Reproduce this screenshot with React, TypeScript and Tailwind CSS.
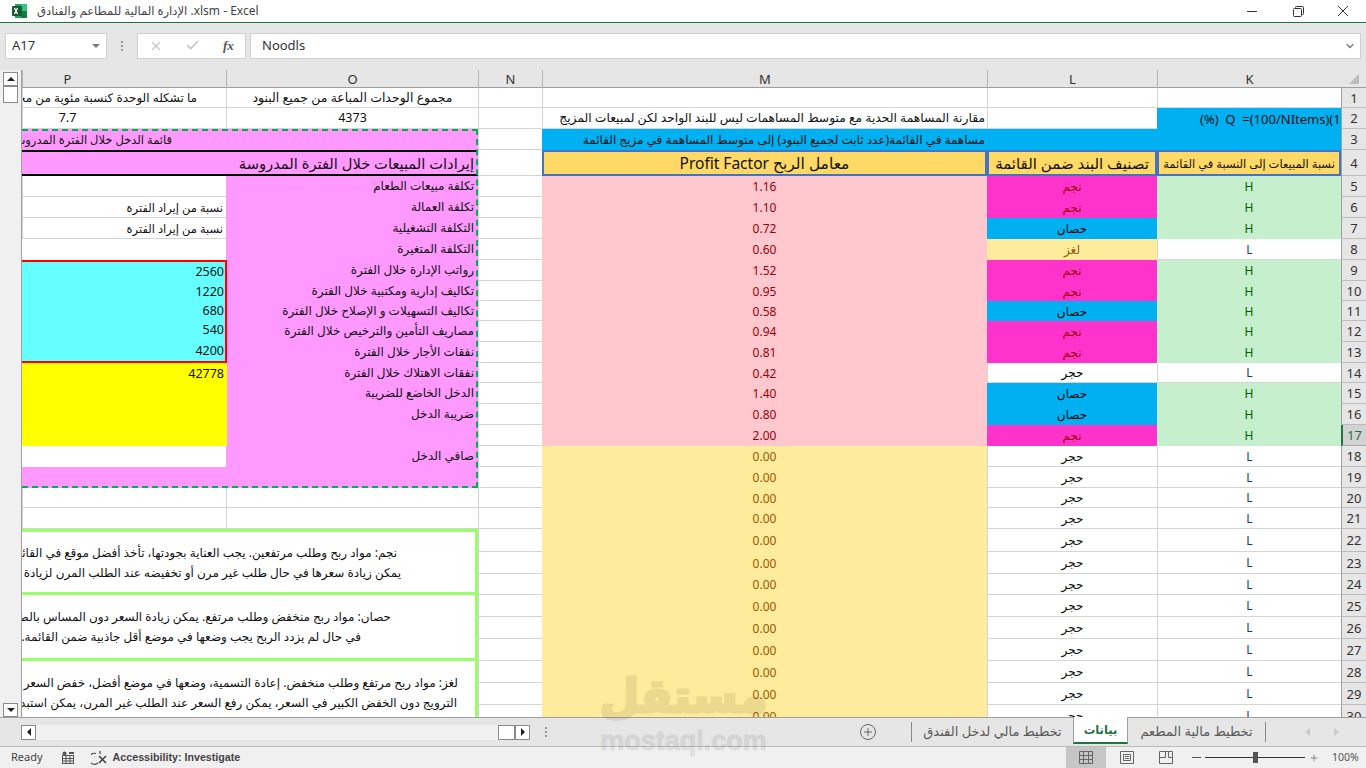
import React from 'react';
import { ChevronDown, Check, X, Plus } from 'lucide-react';

const sans = '[font-family:"Noto_Sans","DejaVu_Sans",sans-serif]';

const rowHeights = [20, 21, 21, 26, 21, 21, 21, 21, 21, 20, 20, 21, 21, 20, 21, 21, 21, 21, 21, 20, 21, 23, 22, 21, 22, 22, 22, 22, 22, 22];

// excel rows 5-17: [K, L, M]
const items: [string, string, string][] = [
  ['H', 'نجم', '1.16'],
  ['H', 'نجم', '1.10'],
  ['H', 'حصان', '0.72'],
  ['L', 'لغز', '0.60'],
  ['H', 'نجم', '1.52'],
  ['H', 'نجم', '0.95'],
  ['H', 'حصان', '0.58'],
  ['H', 'نجم', '0.94'],
  ['H', 'نجم', '0.81'],
  ['L', 'حجر', '0.42'],
  ['H', 'حصان', '1.40'],
  ['H', 'حصان', '0.80'],
  ['H', 'نجم', '2.00'],
];

const costLabels = [
  'تكلفة مبيعات الطعام',
  'تكلفة العمالة',
  'التكلفة التشغيلية',
  'التكلفة المتغيرة',
  'رواتب الإدارة خلال الفترة',
  'تكاليف إدارية ومكتبية خلال الفترة',
  'تكاليف التسهيلات و الإصلاح خلال الفترة',
  'مصاريف التأمين والترخيص خلال الفترة',
  'نفقات الأجار خلال الفترة',
  'نفقات الاهتلاك خلال الفترة',
  'الدخل الخاضع للضريبة',
  'ضريبة الدخل',
  '',
  'صافي الدخل',
];

const classColor: Record<string, string> = {
  'نجم': 'bg-[#FF33CC] text-[#9C0006]',
  'حصان': 'bg-[#00B0F0] text-black',
  'لغز': 'bg-[#FFEB9C] text-[#9C5700]',
  'حجر': 'bg-white text-black border-b border-l border-[#d4d4d4]',
};

const line = 'border-b border-l border-[#d4d4d4]';

// r = excel row (0 = column letters), c = 1 row header, 2 K, 3 L, 4 M, 5 N, 6 O, 7 P
function Cell({ r, c, rs = 1, cs = 1, className = '', children }: { r: number; c: number; rs?: number; cs?: number; className?: string; children?: React.ReactNode }) {
  return (
    <div
      className={`flex items-center overflow-hidden whitespace-nowrap pt-px text-[12px] leading-none ${className}`}
      style={{ gridRow: `${r + 1} / span ${rs}`, gridColumn: `${c} / span ${cs}` }}
    >
      {children}
    </div>
  );
}

function NoteBox({ r, first, lines }: { r: number; first?: boolean; lines: [string, string, string, string] }) {
  return (
    <Cell r={r} c={6} rs={3} cs={2} className={`border-[3px] border-l-0 border-[#99FF66] bg-white flex-col !items-start justify-center gap-[8px] text-[#111] ${first ? '' : 'border-t-0'}`}>
      <div className={lines[1]}>{lines[0]}</div>
      <div className={lines[3]}>{lines[2]}</div>
    </Cell>
  );
}

function Sheet() {
  const headers: [number, string, string][] = [
    [2, 'K', 'justify-center'],
    [3, 'L', 'justify-center'],
    [4, 'M', 'justify-center'],
    [5, 'N', 'justify-center'],
    [6, 'O', 'justify-center'],
    [7, 'P', 'justify-center pr-[114px]'],
  ];
  return (
    <div
      dir="rtl"
      className={`grid flex-1 h-[647px] overflow-hidden bg-white border-l border-[#a0a0a0] text-[#111] ${sans} grid-cols-[25px_184px_170px_445px_64px_252px_204px]`}
      style={{ gridTemplateRows: `18px ${rowHeights.map((h) => `${h}px`).join(' ')}` }}
    >
      {/* corner */}
      <Cell r={0} c={1} className="bg-[#e6e6e6] border-b border-[#9f9f9f] justify-center">
        <svg width="12" height="12" viewBox="0 0 12 12"><path d="M11 1v10H1z" fill="#bdbdbd" /></svg>
      </Cell>
      {headers.map(([c, name, cls]) => (
        <Cell key={name} r={0} c={c} className={`bg-[#e6e6e6] border-b border-l border-b-[#9f9f9f] border-l-[#b5b5b5] !pt-[2px] !text-[13px] text-[#333] ${cls}`}>{name}</Cell>
      ))}

      {/* row numbers */}
      {rowHeights.map((_, i) => (
        <Cell
          key={i}
          r={i + 1}
          c={1}
          className={`justify-center border-b !text-[13px] ${i + 1 === 17 ? 'bg-[#d2d2d2] border-b-[#a8a8a8] border-l-2 border-l-[#217346] text-[#217346]' : 'bg-[#e6e6e6] border-l border-l-[#9f9f9f] border-b-[#bdbdbd] text-[#333]'}`}
        >
          {i + 1}
        </Cell>
      ))}

      {/* rows 1-4 */}
      <Cell r={1} c={2} className={line} />
      <Cell r={1} c={3} className={line} />
      <Cell r={1} c={4} className={line} />
      <Cell r={1} c={6} className={`${line} justify-center !text-[12.5px]`}>مجموع الوحدات المباعة من جميع البنود</Cell>
      <Cell r={1} c={7} className={`${line} pr-[29px]`}>ما تشكله الوحدة كنسبة مئوية من مجموع الوحدات</Cell>

      <Cell r={2} c={2} className="bg-[#00B0F0]">
        <div dir="ltr" className="pl-[43px] whitespace-pre !text-[13px] w-full text-left">{'(%)  Q  =(100/NItems)(1'}</div>
      </Cell>
      <Cell r={2} c={3} className={line} />
      <Cell r={2} c={4} className={`${line} pr-[2px] !text-[12.3px]`}>مقارنة المساهمة الحدية مع متوسط المساهمات ليس للبند الواحد لكن لمبيعات المزيج</Cell>
      <Cell r={2} c={6} className={`${line} justify-center !text-[12.5px]`}>4373</Cell>
      <Cell r={2} c={7} className={`${line} justify-center pr-[114px] !text-[12.5px]`}>7.7</Cell>

      <Cell r={3} c={2} cs={3} className="bg-[#00B0F0] pr-[356px]">مساهمة في القائمة(عدد ثابت لجميع البنود) إلى متوسط المساهمة في مزيج القائمة</Cell>
      <Cell r={3} c={6} cs={2} className="bg-[#FF99FF] pr-[306px] !text-[11.5px]">قائمة الدخل خلال الفترة المدروسة</Cell>

      <Cell r={4} c={2} className="bg-[#FFD966] border-2 border-[#4472C4] justify-center !text-[11.5px]">نسبة المبيعات إلى النسبة في القائمة</Cell>
      <Cell r={4} c={3} className="bg-[#FFD966] border-2 border-[#4472C4] justify-center !text-[15px]">تصنيف البند ضمن القائمة</Cell>
      <Cell r={4} c={4} className="bg-[#FFD966] border-2 border-[#4472C4] justify-center !text-[15.5px]">معامل الربح Profit Factor</Cell>
      <Cell r={4} c={6} cs={2} className="bg-[#FF99FF] border-y-2 border-black pr-[4px] !text-[14.7px]">إيرادات المبيعات خلال الفترة المدروسة</Cell>

      {/* k, l, m table */}
      {items.map(([k, l, m], i) => (
        <React.Fragment key={i}>
          <Cell r={i + 5} c={2} className={`justify-center ${k === 'H' ? 'bg-[#C6EFCE] text-[#006100]' : `bg-white text-[#1f3864] ${line}`}`}>{k}</Cell>
          <Cell r={i + 5} c={3} className={`justify-center ${classColor[l]}`}>{l}</Cell>
          <Cell r={i + 5} c={4} className="justify-center bg-[#FFC7CE] text-[#9C0006]">{m}</Cell>
        </React.Fragment>
      ))}
      {rowHeights.slice(17).map((_, i) => (
        <React.Fragment key={i}>
          <Cell r={i + 18} c={2} className={`justify-center text-[#1f3864] ${line}`}>L</Cell>
          <Cell r={i + 18} c={3} className={`justify-center ${line}`}>حجر</Cell>
          <Cell r={i + 18} c={4} className="justify-center bg-[#FFEB9C] text-[#9C5700]">0.00</Cell>
        </React.Fragment>
      ))}

      {/* column N */}
      {rowHeights.map((_, i) => (
        <Cell key={i} r={i + 1} c={5} className={line} />
      ))}

      {/* income list */}
      {costLabels.map((label, i) => (
        <Cell key={i} r={i + 5} c={6} className="bg-[#FF99FF] pr-[4px] !items-start !pt-[4px]">{label}</Cell>
      ))}
      <Cell r={5} c={7} className={line} />
      <Cell r={6} c={7} className={`${line} pr-[3px] !text-[11.5px]`}>نسبة من إيراد الفترة</Cell>
      <Cell r={7} c={7} className={`${line} pr-[3px] !text-[11.5px]`}>نسبة من إيراد الفترة</Cell>
      <Cell r={8} c={7} />
      <Cell r={9} c={7} rs={5} className="-mr-px z-[1] bg-[#66FFFF] border-2 border-l-0 border-[#FF0000] flex-col !items-start !text-[12.5px]">
        <div className="h-[20px] flex items-center pr-[1px]">2560</div>
        <div className="h-[20px] flex items-center pr-[1px]">1220</div>
        <div className="h-[20px] flex items-center pr-[1px]">680</div>
        <div className="h-[21px] flex items-center pr-[1px]">540</div>
        <div className="h-[21px] flex items-center pr-[1px]">4200</div>
      </Cell>
      <Cell r={14} c={7} rs={4} className="-mr-px z-[1] bg-[#FFFF00] flex-col !items-start !text-[12.5px] pr-[3px]">
        <div className="h-[20px] flex items-center">42778</div>
      </Cell>
      <Cell r={18} c={7} />
      <Cell r={19} c={6} cs={2} className="bg-[#FF99FF]" />
      <Cell r={3} c={6} rs={17} cs={2} className="border-2 border-l-0 border-dashed border-[#00B050] pointer-events-none z-10" />

      {/* rows 20-21 */}
      {[20, 21].map((r) => (
        <React.Fragment key={r}>
          <Cell r={r} c={6} className={line} />
          <Cell r={r} c={7} className={line} />
        </React.Fragment>
      ))}

      <NoteBox r={22} first lines={['نجم: مواد ربح وطلب مرتفعين. يجب العناية بجودتها، تأخذ أفضل موقع في القائمة', 'pr-[78px]', 'يمكن زيادة سعرها في حال طلب غير مرن أو تخفيضه عند الطلب المرن لزيادة المبيعات', 'pr-[74px]']} />
      <NoteBox r={25} lines={['حصان: مواد ربح منخفض وطلب مرتفع. يمكن زيادة السعر دون المساس بالطلب', 'pr-[84px]', 'في حال لم يزدد الربح يجب وضعها في موضع أقل جاذبية ضمن القائمة.', 'pr-[114px]']} />
      <NoteBox r={28} lines={['لغز: مواد ربح مرتفع وطلب منخفض. إعادة التسمية، وضعها في موضع أفضل، خفض السعر', 'pr-[17px]', 'الترويج دون الخفض الكبير في السعر، يمكن رفع السعر عند الطلب غير المرن، يمكن استبدالها', 'pr-[18px]']} />
    </div>
  );
}

function ScrollBtn({ children, className = '' }: { children?: React.ReactNode; className?: string }) {
  return <div className={`flex items-center justify-center bg-white border border-[#8a8a8a] ${className}`}>{children}</div>;
}

export default function App() {
  return (
    <div className={`w-[1366px] h-[768px] overflow-hidden flex flex-col relative bg-[#e6e6e6] text-[#333] ${sans}`}>
      {/* title bar */}
      <div className="h-[23px] shrink-0 bg-white border-b border-[#217346] flex items-center pl-[11px]">
        <svg width="16" height="16" viewBox="0 0 16 16">
          <rect x="4" y="1" width="12" height="14" fill="#21a366" />
          <rect x="10" y="1" width="6" height="7" fill="#33c481" />
          <rect x="10" y="8" width="6" height="7" fill="#107c41" />
          <rect x="1" y="3" width="10" height="10" rx="1" fill="#185c37" />
          <path d="M3.5 5l3 6M6.5 5l-3 6" stroke="#fff" strokeWidth="1.3" />
        </svg>
        <div className="ml-[10px] text-[12px] text-[#444]"><span className="text-[11.6px]">الإدارة المالية للمطاعم والفنادق</span> .xlsm - Excel</div>
        <div className="ml-auto flex items-center">
          <svg width="10" height="10" viewBox="0 0 10 10" stroke="#333"><path d="M0 5.5h10" /></svg>
          <svg width="11" height="11" viewBox="0 0 11 11" fill="none" stroke="#333" className="ml-[36px]">
            <rect x="0.5" y="2.5" width="8" height="8" rx="1" />
            <path d="M2.5 2.5v-1a1 1 0 0 1 1-1h6a1 1 0 0 1 1 1v6a1 1 0 0 1-1 1h-1" />
          </svg>
          <svg width="10" height="10" viewBox="0 0 10 10" stroke="#333" className="ml-[34px] mr-[18px]"><path d="M0 0l10 10M10 0L0 10" /></svg>
        </div>
      </div>

      {/* formula bar */}
      <div className="h-[47px] shrink-0 flex items-center pl-[5px] pr-[5px] pb-[2px]">
        <div className="w-[102px] h-[26px] bg-white border border-[#d0d0d0] flex items-center justify-between px-[6px] text-[13px]">
          A17
          <svg width="8" height="4" viewBox="0 0 8 4"><path d="M0 0h8L4 4z" fill="#777" /></svg>
        </div>
        <div className="w-[30px] flex flex-col items-center gap-[2px]">
          <span className="w-[2px] h-[2px] bg-[#9a9a9a]" />
          <span className="w-[2px] h-[2px] bg-[#9a9a9a]" />
          <span className="w-[2px] h-[2px] bg-[#9a9a9a]" />
        </div>
        <div className="w-[109px] h-[26px] bg-white border border-[#d0d0d0] flex items-center">
          <X size={14} strokeWidth={2} className="ml-[11px] text-[#c4c4c4]" />
          <Check size={15} strokeWidth={2.5} className="ml-[22px] text-[#c4c4c4]" />
          <span className="ml-[23px] text-[13px] italic font-bold text-[#555] [font-family:'Liberation_Serif',serif]">fx</span>
        </div>
        <div className="ml-[4px] flex-1 h-[26px] bg-white border border-[#d0d0d0] flex items-center justify-between pl-[11px] pr-[4px] text-[13px]">
          Noodls
          <ChevronDown size={12} strokeWidth={2.5} className="text-[#777]" />
        </div>
      </div>

      {/* sheet */}
      <div className="h-[647px] shrink-0 flex">
        <div className="w-[21px] shrink-0 bg-[#f0f0f0] flex flex-col pl-[3px] pt-[2px]">
          <ScrollBtn className="w-[15px] h-[14px]">
            <svg width="8" height="4" viewBox="0 0 8 4"><path d="M4 0l4 4H0z" fill="#222" /></svg>
          </ScrollBtn>
          <ScrollBtn className="w-[15px] h-[17px]" />
          <ScrollBtn className="w-[15px] h-[14px] mt-auto">
            <svg width="8" height="4" viewBox="0 0 8 4"><path d="M0 0h8L4 4z" fill="#222" /></svg>
          </ScrollBtn>
        </div>
        <Sheet />
      </div>

      {/* sheet tabs */}
      <div className="h-[29px] shrink-0 flex items-center border-t border-[#a0a0a0] relative">
        <ScrollBtn className="w-[15px] h-[15px] ml-[21px]">
          <svg width="4" height="8" viewBox="0 0 4 8"><path d="M4 0v8L0 4z" fill="#222" /></svg>
        </ScrollBtn>
        <div className="w-[462px] h-[15px] bg-[#f0f0f0]" />
        <ScrollBtn className="w-[17px] h-[15px]" />
        <ScrollBtn className="w-[15px] h-[15px]">
          <svg width="4" height="8" viewBox="0 0 4 8"><path d="M0 0v8l4-4z" fill="#222" /></svg>
        </ScrollBtn>
        <div className="ml-[15px] flex flex-col gap-[2px]">
          <span className="w-[2px] h-[2px] bg-[#9a9a9a]" />
          <span className="w-[2px] h-[2px] bg-[#9a9a9a]" />
          <span className="w-[2px] h-[2px] bg-[#9a9a9a]" />
        </div>
        <div className="ml-[313px] w-[16px] h-[16px] rounded-full border border-[#666] flex items-center justify-center">
          <Plus size={12} strokeWidth={2} className="text-[#666]" />
        </div>
        <div className="ml-[35px] w-px h-[20px] bg-[#8a8a8a]" />
        <div className="w-[161px] text-center text-[13px] text-[#5b5b5b]">تخطيط مالي لدخل الفندق</div>
        <div className="w-[55px] h-[27px] self-start -mt-px bg-white border-x border-[#a0a0a0] border-b-2 border-b-[#217346] text-[#217346] font-bold text-[11.5px] flex items-center justify-center">بيانات</div>
        <div className="w-[137px] text-center text-[13px] text-[#5b5b5b]">تخطيط مالية المطعم</div>
        <div className="w-px h-[20px] bg-[#8a8a8a]" />
        <svg width="5" height="8" viewBox="0 0 5 8" className="ml-[39px]"><path d="M5 0v8L0 4z" fill="#c8c8c8" /></svg>
        <svg width="5" height="8" viewBox="0 0 5 8" className="ml-[24px]"><path d="M0 0v8l5-4z" fill="#c8c8c8" /></svg>
      </div>

      {/* status bar */}
      <div className="h-[22px] shrink-0 flex items-center bg-[#f0f0f0] border-t border-[#bcbcbc] text-[11px]">
        <span className="ml-[11px] text-[#444]">Ready</span>
        <svg width="14" height="13" viewBox="0 0 14 13" className="ml-[18px]" fill="none" stroke="#555">
          <rect x="1.5" y="4.5" width="11" height="8" />
          <path d="M1.5 7.5h11M1.5 10h11M5 4.5v8M9 4.5v8" />
          <circle cx="3.5" cy="2.5" r="2" fill="#555" stroke="none" />
          <rect x="8" y="1" width="5" height="2" fill="#555" stroke="none" />
        </svg>
        <svg width="17" height="16" viewBox="0 0 17 16" className="ml-[16px]" fill="none" stroke="#444" strokeWidth="1.2">
          <path d="M9 1v3M5 3.5a5.5 5.5 0 1 0 2 9.5" />
          <path d="M8 6l7 7M15 6l-7 7" strokeWidth="1.6" />
        </svg>
        <span className="ml-[5px] font-bold text-[10.7px] text-[#444] [font-family:'Liberation_Sans',sans-serif]">Accessibility: Investigate</span>
        <div className="ml-auto flex items-center h-full">
          <div className="w-[40px] h-full bg-[#c6c6c6] flex items-center justify-center">
            <svg width="14" height="13" viewBox="0 0 14 13" fill="none" stroke="#666"><path d="M.5.5h13v12H.5zM.5 4.5h13M.5 8.5h13M4.5.5v12M9.5.5v12" /></svg>
          </div>
          <svg width="14" height="13" viewBox="0 0 14 13" fill="none" stroke="#666" className="ml-[14px]"><path d="M.5.5h13v12H.5zM3.5 3.5h7v6h-7zM5 5.5h4M5 7.5h4" /></svg>
          <svg width="14" height="13" viewBox="0 0 14 13" fill="none" stroke="#666" className="ml-[25px]"><path d="M.5.5h13v12H.5zM.5 6.5h6v-6M9.5.5v6h4" /></svg>
          <div className="ml-[19px] w-[9px] h-px bg-[#555]" />
          <div className="ml-[4px] w-[100px] h-px bg-[#333] relative">
            <span className="absolute left-[48px] -top-[5px] w-[5px] h-[11px] bg-[#555]" />
          </div>
          <Plus size={10} strokeWidth={1.5} className="ml-[4px] text-[#555]" />
          <span className="ml-[13px] mr-[8px] w-[26px] text-[10.5px] text-[#555]">100%</span>
        </div>
      </div>

      {/* mostaql watermark */}
      <div className="absolute left-[596px] top-[661px] w-[175px] flex flex-col items-center pointer-events-none text-black opacity-[0.07] font-bold">
        <div dir="rtl" className="text-[46px] leading-[66px] [-webkit-text-stroke:3px_black]">مستقل</div>
        <div className="text-[27px] leading-[28px] [-webkit-text-stroke:1px_black] [font-family:'Liberation_Sans',sans-serif]">mostaql.com</div>
      </div>
    </div>
  );
}
